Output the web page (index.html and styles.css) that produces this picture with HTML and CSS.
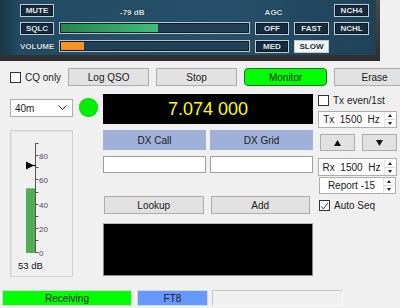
FILE: index.html
```html
<!DOCTYPE html>
<html lang="en">

<head>
    <meta charset="UTF-8" />
    <meta name="viewport" content="width=device-width, initial-scale=1.0" />
    <title>FT8 Monitor</title>
    <link rel="stylesheet" href="styles.css">
</head>

<body>
    <div class="rig-frame">
        <div class="rig">
            <button class="rig-btn">MUTE</button>
            <span class="rig-level">-79 dB</span>
            <span class="rig-agc">AGC</span>
            <span></span>
            <button class="rig-btn">NCH4</button>

            <button class="rig-btn">SQLC</button>
            <div class="rig-bar"><div class="fill-sql"></div></div>
            <button class="rig-btn">OFF</button>
            <button class="rig-btn">FAST</button>
            <button class="rig-btn">NCHL</button>

            <span class="rig-label">VOLUME</span>
            <div class="rig-bar"><div class="fill-vol"></div></div>
            <button class="rig-btn">MED</button>
            <button class="rig-btn active">SLOW</button>
            <span></span>
        </div>
    </div>

    <div class="toolbar">
        <label class="check"><span class="box"></span>CQ only</label>
        <button class="btn wide">Log QSO</button>
        <button class="btn wide">Stop</button>
        <button class="btn wide monitor">Monitor</button>
        <button class="btn wide">Erase</button>
    </div>

    <div class="main">
        <div class="col-left">
            <div class="band">
                <span>40m</span>
                <svg width="9" height="6" viewBox="0 0 9 6"><path d="M0.5 0.5 L4.5 4.5 L8.5 0.5" fill="none" stroke="#333" stroke-width="1"/></svg>
            </div>
            <div class="meter">
                <svg width="62" height="145" viewBox="0 0 62 145">
                    <rect x="15" y="57.3" width="9.5" height="64.7" fill="#53ad53"/>
                    <line x1="24.5" y1="12" x2="24.5" y2="122" stroke="#555" stroke-width="1"/>
                    <g stroke="#555" stroke-width="1">
                        <line x1="24.5" y1="12.5" x2="27.5" y2="12.5"/>
                        <line x1="24.5" y1="24.5" x2="27.5" y2="24.5"/>
                        <line x1="24.5" y1="36.5" x2="27.5" y2="36.5"/>
                        <line x1="24.5" y1="48.5" x2="27.5" y2="48.5"/>
                        <line x1="24.5" y1="61.5" x2="27.5" y2="61.5"/>
                        <line x1="24.5" y1="73.5" x2="27.5" y2="73.5"/>
                        <line x1="24.5" y1="85.5" x2="27.5" y2="85.5"/>
                        <line x1="24.5" y1="97.5" x2="27.5" y2="97.5"/>
                        <line x1="24.5" y1="109.5" x2="27.5" y2="109.5"/>
                        <line x1="24.5" y1="121.5" x2="27.5" y2="121.5"/>
                    </g>
                    <g class="scale-txt">
                        <text x="28" y="27.5">80</text>
                        <text x="28" y="52">60</text>
                        <text x="28" y="76.5">40</text>
                        <text x="28" y="101">20</text>
                        <text x="28" y="125">0</text>
                    </g>
                    <polygon points="15,30.5 23,34.5 15,38.5" fill="#000"/>
                    <line x1="22" y1="34.5" x2="25" y2="34.5" stroke="#000" stroke-width="1"/>
                    <text class="db-txt" x="7" y="138">53 dB</text>
                </svg>
            </div>
        </div>

        <div class="led"></div>

        <div class="col-center">
            <div class="freq">7.074 000</div>
            <div class="pair">
                <div class="dx-head">DX Call</div>
                <div class="dx-head">DX Grid</div>
            </div>
            <div class="pair inputs">
                <input type="text" class="field" />
                <input type="text" class="field" />
            </div>
            <div class="pair actions">
                <button class="btn">Lookup</button>
                <button class="btn">Add</button>
            </div>
            <div class="screen"></div>
        </div>

        <div class="col-right">
            <label class="check"><span class="box"></span>Tx even/1st</label>
            <div class="spin tx"><span class="spin-txt">Tx&nbsp; 1500&nbsp; Hz</span><span class="spinner"><i class="up"></i><i class="down"></i></span></div>
            <div class="arrows">
                <button class="btn arrow"><svg width="7" height="6" viewBox="0 0 7 6"><polygon points="3.5,0 7,6 0,6" fill="#111"/></svg></button>
                <button class="btn arrow"><svg width="7" height="6" viewBox="0 0 7 6"><polygon points="0,0 7,0 3.5,6" fill="#111"/></svg></button>
            </div>
            <div class="spin rx"><span class="spin-txt">Rx&nbsp; 1500&nbsp; Hz</span><span class="spinner"><i class="up"></i><i class="down"></i></span></div>
            <div class="spin report"><span class="spin-txt">Report -15</span><span class="spinner"><i class="up"></i><i class="down"></i></span></div>
            <label class="check auto">
                <span class="box"><svg width="11" height="11" viewBox="0 0 11 11"><path d="M1.5 5.5 L4 8.5 L9.5 1.5" fill="none" stroke="#222" stroke-width="1.1"/></svg></span>Auto Seq
            </label>
        </div>
    </div>

    <div class="status">
        <span class="st receiving">Receiving</span>
        <span class="st mode">FT8</span>
        <span class="st empty"></span>
    </div>
</body>

</html>
```

FILE: styles.css
```css
body {
  margin: 0;
  width: 400px;
  height: 308px;
  overflow: hidden;
  background-color: #f0f0f0;
  font-family: 'Liberation Sans', Arial, sans-serif;
  font-size: 10px;
  color: #1a1a1a;
}

/* rig control panel */
.rig-frame {
  width: 380px;
  height: 61px;
  background: linear-gradient(#4a4a4a, #2e2e2e);
}

.rig {
  width: 376px;
  height: 55px;
  box-sizing: border-box;
  padding: 4px 0 0 20px;
  background: linear-gradient(90deg, #1a3649 0%, #234a62 5%, #26506a 60%, #1f4257 100%);
  display: grid;
  grid-template-columns: 34px 191px 34px 35px 35px;
  grid-template-rows: 13px 13px 13px;
  column-gap: 5px;
  row-gap: 5px;
}

.rig-btn {
  margin: 0;
  padding: 0;
  background-color: #152c40;
  border: 1px solid #c3cbd2;
  box-shadow: inset 0 0 0 1px #0b1b29;
  color: #e8eef2;
  font-family: 'Liberation Sans', Arial, sans-serif;
  font-weight: bold;
  font-size: 8px;
  text-shadow: 0 0 1px #000;
}

.rig-btn.active {
  background-color: #f4f8fa;
  color: #1c2e3c;
  text-shadow: none;
  box-shadow: none;
}

.rig-level,
.rig-agc,
.rig-label {
  color: #dde6ec;
  font-weight: bold;
  font-size: 8px;
  text-shadow: 0 0 1px #000;
  align-self: end;
  line-height: 9px;
}

.rig-level {
  padding-left: 61px;
}

.rig-agc {
  text-align: center;
  padding-left: 3px;
}

.rig-label {
  align-self: center;
}

.rig-bar {
  height: 12px;
  border: 1px solid #bcc5cc;
  box-shadow: inset 0 0 0 1px #0c1c2a;
  background-color: #1e4158;
  padding: 1px;
  box-sizing: border-box;
  display: flex;
}

.fill-sql {
  width: 97px;
  background: linear-gradient(90deg, #24874f, #3fbd78);
}

.fill-vol {
  width: 23px;
  background-color: #f7931e;
}

/* toolbar */
.toolbar {
  display: flex;
  align-items: center;
  margin-top: 7px;
  padding-left: 10px;
  height: 18px;
  gap: 7px;
}

.check {
  display: flex;
  align-items: center;
  gap: 4px;
  font-size: 10px;
  white-space: nowrap;
}

.box {
  width: 11px;
  height: 11px;
  box-sizing: border-box;
  border: 1px solid #333;
  background-color: #fff;
  display: flex;
}

.toolbar .check {
  width: 52px;
}

.btn {
  margin: 0;
  padding: 0;
  height: 18px;
  background-color: #e1e1e1;
  border: 1px solid #adadad;
  font-family: 'Liberation Sans', Arial, sans-serif;
  font-size: 10px;
  color: #1a1a1a;
}

.btn.wide {
  width: 81px;
  flex-shrink: 0;
}

.btn.monitor {
  width: 83px;
  background-color: #00ff00;
  border: 1px solid #2b6b2b;
  border-radius: 4px;
}

/* main area */
.main {
  display: flex;
  margin-top: 8px;
  height: 188px;
}

.col-left {
  margin-left: 10px;
  width: 63px;
}

.band {
  margin-top: 5px;
  height: 18px;
  box-sizing: border-box;
  border: 1px solid #adadad;
  background-color: #fff;
  display: flex;
  align-items: center;
  justify-content: space-between;
  padding: 0 5px 0 4px;
}

.meter {
  margin-top: 13px;
  height: 147px;
  box-sizing: border-box;
  border: 1px solid #d2d2d2;
  box-shadow: inset 1px 1px 0 #e4e4e4;
  background-color: #f0f0f0;
}

.meter svg {
  display: block;
}

.scale-txt text {
  font-family: 'Liberation Sans', Arial, sans-serif;
  font-size: 8px;
  fill: #554466;
}

.db-txt {
  font-family: 'Liberation Sans', Arial, sans-serif;
  font-size: 9.5px;
  fill: #111;
}

.led {
  margin: 4px 0 0 6px;
  width: 19px;
  height: 19px;
  border-radius: 50%;
  background-color: #00f000;
  box-shadow: inset 0 0 0 1px #1ed81e;
}

.col-center {
  margin-left: 5px;
  width: 210px;
}

.freq {
  height: 30px;
  background-color: #000;
  color: #ffff00;
  font-size: 18px;
  display: flex;
  align-items: center;
  justify-content: center;
}

.pair {
  display: flex;
  gap: 4px;
  margin-top: 6px;
}

.dx-head {
  flex: 1;
  height: 20px;
  background-color: #9fb1d9;
  display: flex;
  align-items: center;
  justify-content: center;
}

.pair.inputs {
  margin-top: 6px;
}

.field {
  flex: 1;
  width: 0;
  margin: 0;
  height: 17px;
  box-sizing: border-box;
  border: 1px solid #a0a0a0;
  background-color: #fff;
}

.pair.actions {
  margin-top: 23px;
  gap: 7px;
  padding: 0 3px 0 1px;
}

.pair.actions .btn {
  flex: 1;
}

.screen {
  margin-top: 9px;
  height: 53px;
  box-sizing: border-box;
  background-color: #000;
  border: 1px solid #8a8a8a;
  border-top-color: #b8b8b8;
}

.col-right {
  margin-left: 5px;
  width: 79px;
}

.col-right .check {
  height: 12px;
}

.spin {
  height: 17px;
  box-sizing: border-box;
  border: 1px solid #adadad;
  background-color: #fff;
  display: flex;
  align-items: center;
}

.spin-txt {
  flex: 1;
  text-align: center;
  font-size: 10px;
}

.spinner {
  width: 10px;
  height: 15px;
  display: flex;
  flex-direction: column;
  border-left: 1px solid #e4e4e4;
  margin-right: 1px;
}

.spinner i {
  flex: 1;
  display: flex;
  align-items: center;
  justify-content: center;
}

.spinner i::after {
  content: "";
  border-left: 2.5px solid transparent;
  border-right: 2.5px solid transparent;
}

.spinner .up::after {
  border-bottom: 3px solid #222;
}

.spinner .down::after {
  border-top: 3px solid #222;
}

.spinner .up {
  border-bottom: 1px solid #d8d8d8;
}

.spin.tx {
  margin-top: 5px;
}

.arrows {
  display: flex;
  gap: 7px;
  margin-top: 6px;
  padding-left: 2px;
}

.btn.arrow {
  width: 35px;
  height: 17px;
  display: flex;
  align-items: center;
  justify-content: center;
}

.spin.rx {
  margin-top: 7px;
  height: 18px;
}

.spin.report {
  margin-top: 1px;
  margin-left: 1px;
  margin-right: 1px;
}

.check.auto {
  margin-top: 5px;
  margin-left: 1px;
}

/* status bar */
.status {
  display: flex;
  margin-top: 8px;
  padding-left: 2px;
  height: 16px;
}

.st {
  box-sizing: border-box;
  border: 1px solid #d8d8d8;
  display: flex;
  align-items: center;
  justify-content: center;
}

.receiving {
  width: 130px;
  background-color: #00ff00;
}

.mode {
  width: 71px;
  margin-left: 5px;
  background-color: #6699ff;
}

.empty {
  width: 131px;
  margin-left: 4px;
  border: 1px solid #c8c8c8;
  border-right-color: #f8f8f8;
  border-bottom-color: #f8f8f8;
}
```
